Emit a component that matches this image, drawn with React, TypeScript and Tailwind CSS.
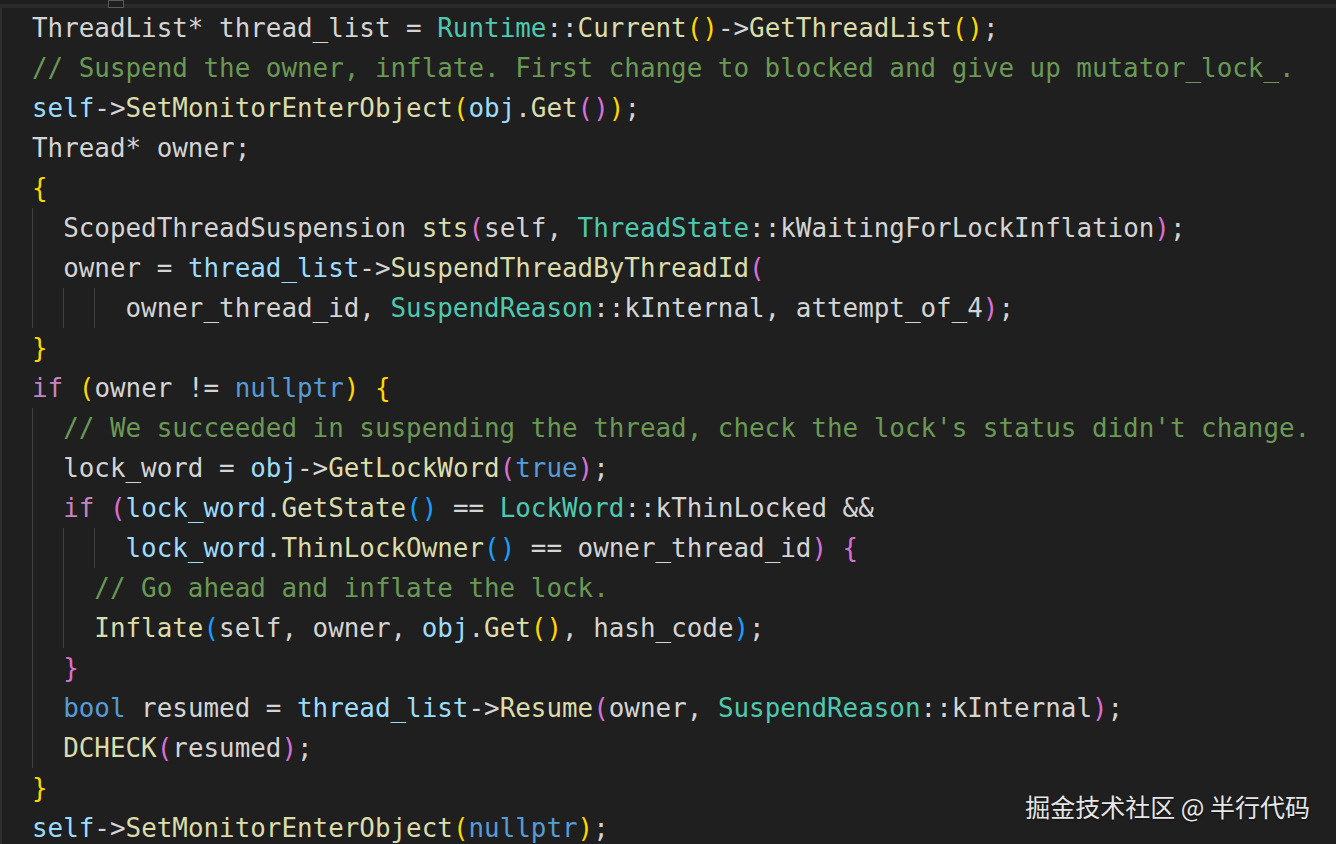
import React from 'react';

// colour keys for the syntax tokens
const C: Record<string, string> = {
  d: 'text-[#d4d4d4]',
  c: 'text-[#6a9955]',
  t: 'text-[#4ec9b0]',
  f: 'text-[#dcdcaa]',
  v: 'text-[#9cdcfe]',
  k: 'text-[#569cd6]',
  p: 'text-[#c586c0]',
  y: 'text-[#ffd700]',
  o: 'text-[#da70d6]',
  b: 'text-[#179fff]',
};

type Line = { g: number; t: [string, string][] };

const lines: Line[] = [
  { g: 0, t: [['d', 'ThreadList* thread_list = '], ['t', 'Runtime'], ['d', '::'], ['f', 'Current'], ['y', '()'], ['d', '->'], ['f', 'GetThreadList'], ['y', '()'], ['d', ';']] },
  { g: 0, t: [['c', '// Suspend the owner, inflate. First change to blocked and give up mutator_lock_.']] },
  { g: 0, t: [['v', 'self'], ['d', '->'], ['f', 'SetMonitorEnterObject'], ['y', '('], ['v', 'obj'], ['d', '.'], ['f', 'Get'], ['o', '()'], ['y', ')'], ['d', ';']] },
  { g: 0, t: [['d', 'Thread* owner;']] },
  { g: 0, t: [['y', '{']] },
  { g: 1, t: [['d', 'ScopedThreadSuspension '], ['f', 'sts'], ['o', '('], ['d', 'self, '], ['t', 'ThreadState'], ['d', '::kWaitingForLockInflation'], ['o', ')'], ['d', ';']] },
  { g: 1, t: [['d', 'owner = '], ['v', 'thread_list'], ['d', '->'], ['f', 'SuspendThreadByThreadId'], ['o', '(']] },
  { g: 3, t: [['d', 'owner_thread_id, '], ['t', 'SuspendReason'], ['d', '::kInternal, attempt_of_4'], ['o', ')'], ['d', ';']] },
  { g: 0, t: [['y', '}']] },
  { g: 0, t: [['p', 'if'], ['d', ' '], ['y', '('], ['d', 'owner != '], ['k', 'nullptr'], ['y', ')'], ['d', ' '], ['y', '{']] },
  { g: 1, t: [['c', "// We succeeded in suspending the thread, check the lock's status didn't change."]] },
  { g: 1, t: [['d', 'lock_word = '], ['v', 'obj'], ['d', '->'], ['f', 'GetLockWord'], ['o', '('], ['k', 'true'], ['o', ')'], ['d', ';']] },
  { g: 1, t: [['p', 'if'], ['d', ' '], ['o', '('], ['v', 'lock_word'], ['d', '.'], ['f', 'GetState'], ['b', '()'], ['d', ' == '], ['t', 'LockWord'], ['d', '::kThinLocked &&']] },
  { g: 3, t: [['v', 'lock_word'], ['d', '.'], ['f', 'ThinLockOwner'], ['b', '()'], ['d', ' == owner_thread_id'], ['o', ')'], ['d', ' '], ['o', '{']] },
  { g: 2, t: [['c', '// Go ahead and inflate the lock.']] },
  { g: 2, t: [['f', 'Inflate'], ['b', '('], ['d', 'self, owner, '], ['v', 'obj'], ['d', '.'], ['f', 'Get'], ['y', '()'], ['d', ', hash_code'], ['b', ')'], ['d', ';']] },
  { g: 1, t: [['o', '}']] },
  { g: 1, t: [['k', 'bool'], ['d', ' resumed = '], ['v', 'thread_list'], ['d', '->'], ['f', 'Resume'], ['o', '('], ['d', 'owner, '], ['t', 'SuspendReason'], ['d', '::kInternal'], ['o', ')'], ['d', ';']] },
  { g: 1, t: [['f', 'DCHECK'], ['o', '('], ['d', 'resumed'], ['o', ')'], ['d', ';']] },
  { g: 0, t: [['y', '}']] },
  { g: 0, t: [['v', 'self'], ['d', '->'], ['f', 'SetMonitorEnterObject'], ['y', '('], ['k', 'nullptr'], ['y', ')'], ['d', ';']] },
];

export default function App() {
  return (
    <div className="relative w-[1336px] h-[844px] overflow-hidden bg-[#1f1f1f]">
      {/* top scroll strip */}
      <div className="flex flex-col h-[8px]">
        <div className="h-[4px] bg-[#1f1f1f]" />
        <div className="h-[4px] bg-[#2a2a2a]" />
      </div>
      <div className="absolute left-[108px] top-0 w-[16px] h-[8px] border border-[#5a5a5a] bg-[#1f1f1f]" />

      {/* editor body */}
      <div
        className="border-l-2 border-[#2e2e2e] pl-[30px] text-[25.9px] leading-[40px] whitespace-pre"
        style={{ fontFamily: '"DejaVu Sans Mono", "Liberation Mono", monospace' }}
      >
        {lines.map((line, i) => (
          <div key={i} className="flex h-[40px]">
            {Array.from({ length: line.g }).map((_, j) => (
              <span key={j} className="w-[2ch] shrink-0 border-l border-[#404040]" />
            ))}
            <span>
              {line.t.map(([k, s], j) => (
                <span key={j} className={C[k]}>
                  {s}
                </span>
              ))}
            </span>
          </div>
        ))}
      </div>

      {/* watermark */}
      <div
        className="absolute right-[26px] bottom-[24px] text-[25px] leading-[28px] text-[#e6e6e6] whitespace-pre [text-shadow:0_1px_2px_rgba(0,0,0,0.6)]"
        style={{ fontFamily: '"Noto Sans CJK SC", "Noto Sans", sans-serif' }}
      >
        掘金技术社区 @ 半行代码
      </div>
    </div>
  );
}
